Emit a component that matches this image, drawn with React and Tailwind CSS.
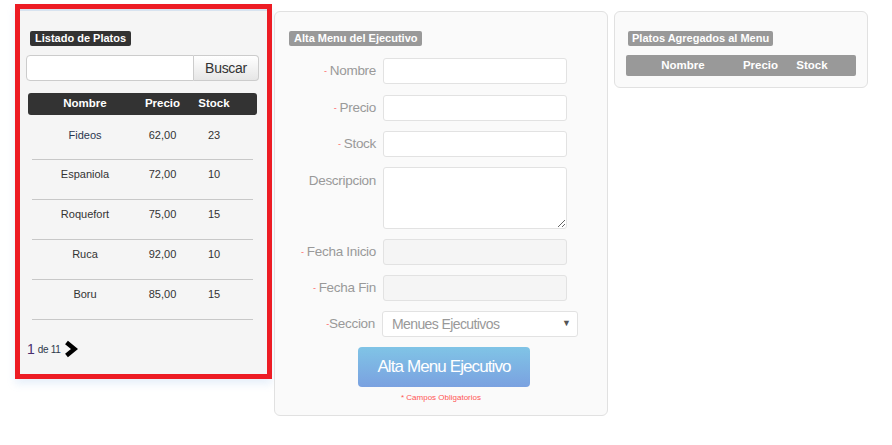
import React from "react";

const rows = [
  ["Fideos", "62,00", "23"],
  ["Espaniola", "72,00", "10"],
  ["Roquefort", "75,00", "15"],
  ["Ruca", "92,00", "10"],
  ["Boru", "85,00", "15"],
];

function Dash() {
  return <span className="text-[#f66] text-[9px] mr-[3px] relative top-[-1px]">-</span>;
}

function FieldRow({ label, req = true, disabled = false, className = "" }) {
  return (
    <div className={"flex items-center " + className}>
      <div className="w-[87px] text-right text-[13.5px] text-[#999] tracking-[-0.3px] leading-[16px]">
        {req && <Dash />}
        {label}
      </div>
      <input
        disabled={disabled}
        className={
          "ml-[7px] w-[184px] h-[26px] rounded-[3px] border border-[#e2e2e2] outline-none " +
          (disabled ? "bg-[#f5f5f5]" : "bg-white")
        }
      />
    </div>
  );
}

export default function App() {
  return (
    <div
      className="w-[892px] h-[445px] bg-white flex items-start pl-[15px] pt-[4px]"
      style={{ fontFamily: '"Liberation Sans", Arial, sans-serif' }}
    >
      {/* Left panel */}
      <div className="w-[257px] h-[375px] border-[5px] border-[#ed1c24] bg-[#f5f5f5] shadow-[0_5px_8px_rgba(120,170,230,0.18)] flex flex-col">
        <div className="h-[2px] bg-[#d7e3f0]" />
        <div className="pl-[6px] pr-[8px] flex flex-col">
          <div className="mt-[20px] ml-[4px] self-start bg-[#333] text-white text-[11px] font-bold leading-[15px] px-[5px] rounded-[2px]">
            Listado de Platos
          </div>
          <div className="mt-[9px] flex h-[26px]">
            <input className="w-[168px] h-[26px] bg-white border border-[#ccc] rounded-l-[4px] outline-none" />
            <div className="w-[65px] h-[26px] border border-l-0 border-[#ccc] rounded-r-[4px] bg-gradient-to-b from-white to-[#e6e6e6] text-[14px] text-[#333] flex items-center justify-center tracking-[-0.3px]">
              Buscar
            </div>
          </div>
          <div className="mt-[12px] mx-[2px]">
            <div className="h-[22px] bg-[#333] rounded-[3px] grid grid-cols-[114px_41px_62px] items-center text-white text-[11.5px] font-bold">
              <div className="text-center">Nombre</div>
              <div className="text-center">Precio</div>
              <div className="text-center">Stock</div>
            </div>
            {rows.map((r, i) => (
              <div
                key={r[0]}
                className={
                  "mx-[4px] border-b border-[#c8c8c8] " +
                  (i === 0 ? "h-[45px] pt-[14px]" : "h-[40px] pt-[8px]")
                }
              >
                <div className="-mx-[4px] grid grid-cols-[114px_41px_62px] text-[11px] leading-[13px] text-[#333]">
                  <div className={"text-center " + (i === 0 ? "text-[#2a3550]" : "")}>{r[0]}</div>
                  <div className="text-center">{r[1]}</div>
                  <div className="text-center">{r[2]}</div>
                </div>
              </div>
            ))}
          </div>
          <div className="mt-[20px] ml-[1px] flex items-center h-[17px]">
            <span className="text-[14px] text-[#4a2f6e] leading-[14px]">1</span>
            <span className="ml-[3px] text-[10px] text-[#2e3a4c] leading-[10px] mt-[3px] tracking-[-0.3px]">de 11</span>
            <svg width="15" height="18" viewBox="0 0 15 18" className="ml-[2px]">
              <polyline points="3.5,2.5 11.5,9 3.5,15.5" fill="none" stroke="#000" strokeWidth="4.5" strokeLinejoin="miter" />
            </svg>
          </div>
        </div>
      </div>

      {/* Middle panel */}
      <div className="ml-[2px] mt-[7px] w-[334px] h-[405px] bg-[#fafafa] border border-[#e1e1e1] rounded-[6px] px-[14px] pt-[19px] flex flex-col">
        <div className="self-start bg-[#999] text-white text-[11px] font-bold leading-[15px] px-[5px] rounded-[2px]">
          Alta Menu del Ejecutivo
        </div>
        <FieldRow label="Nombre" className="mt-[12px]" />
        <FieldRow label="Precio" className="mt-[11px]" />
        <FieldRow label="Stock" className="mt-[10px]" />
        <div className="flex items-start mt-[10px]">
          <div className="w-[87px] text-right text-[13.5px] text-[#999] leading-[16px] pt-[6px] tracking-[-0.3px]">
            Descripcion
          </div>
          <textarea className="ml-[7px] w-[184px] h-[62px] rounded-[3px] border border-[#e2e2e2] bg-white outline-none" />
        </div>
        <FieldRow label="Fecha Inicio" disabled className="mt-[10px]" />
        <FieldRow label="Fecha Fin" disabled className="mt-[10px]" />
        <div className="flex items-center mt-[10px]">
          <div className="w-[86px] text-right text-[13.5px] text-[#999] leading-[16px] tracking-[-0.3px]">
            <span className="text-[#f66] text-[9px] relative top-[-1px]">-</span>Seccion
          </div>
          <div className="ml-[7px] w-[196px] h-[26px] rounded-[3px] border border-[#e2e2e2] bg-white flex items-center justify-between pl-[9px] pr-[6px]">
            <span className="text-[14px] text-[#999] tracking-[-0.6px]">Menues Ejecutivos</span>
            <span className="text-[9px] text-[#555]">▼</span>
          </div>
        </div>
        <div className="flex justify-center mt-[10px] pl-[6px]">
          <div className="w-[172px] h-[40px] rounded-[4px] bg-gradient-to-b from-[#80c4e6] to-[#7aa1e0] text-white text-[17px] tracking-[-0.9px] flex items-center justify-center">
            Alta Menu Ejecutivo
          </div>
        </div>
        <div className="mt-[6px] text-center text-[8px] text-[#f55] leading-[10px]">* Campos Obligatorios</div>
      </div>

      {/* Right panel */}
      <div className="ml-[6px] mt-[7px] w-[254px] h-[77px] bg-[#fafafa] border border-[#e1e1e1] rounded-[6px] px-[11px] pt-[19px] flex flex-col">
        <div className="ml-[2px] self-start bg-[#999] text-white text-[11px] font-bold leading-[15px] px-[4px] rounded-[2px]">
          Platos Agregados al Menu
        </div>
        <div className="mt-[9px] h-[21px] bg-[#999] rounded-[2px] grid grid-cols-[114px_41px_62px] items-center text-white text-[11.5px] font-bold">
          <div className="text-center">Nombre</div>
          <div className="text-center">Precio</div>
          <div className="text-center">Stock</div>
        </div>
      </div>
    </div>
  );
}
